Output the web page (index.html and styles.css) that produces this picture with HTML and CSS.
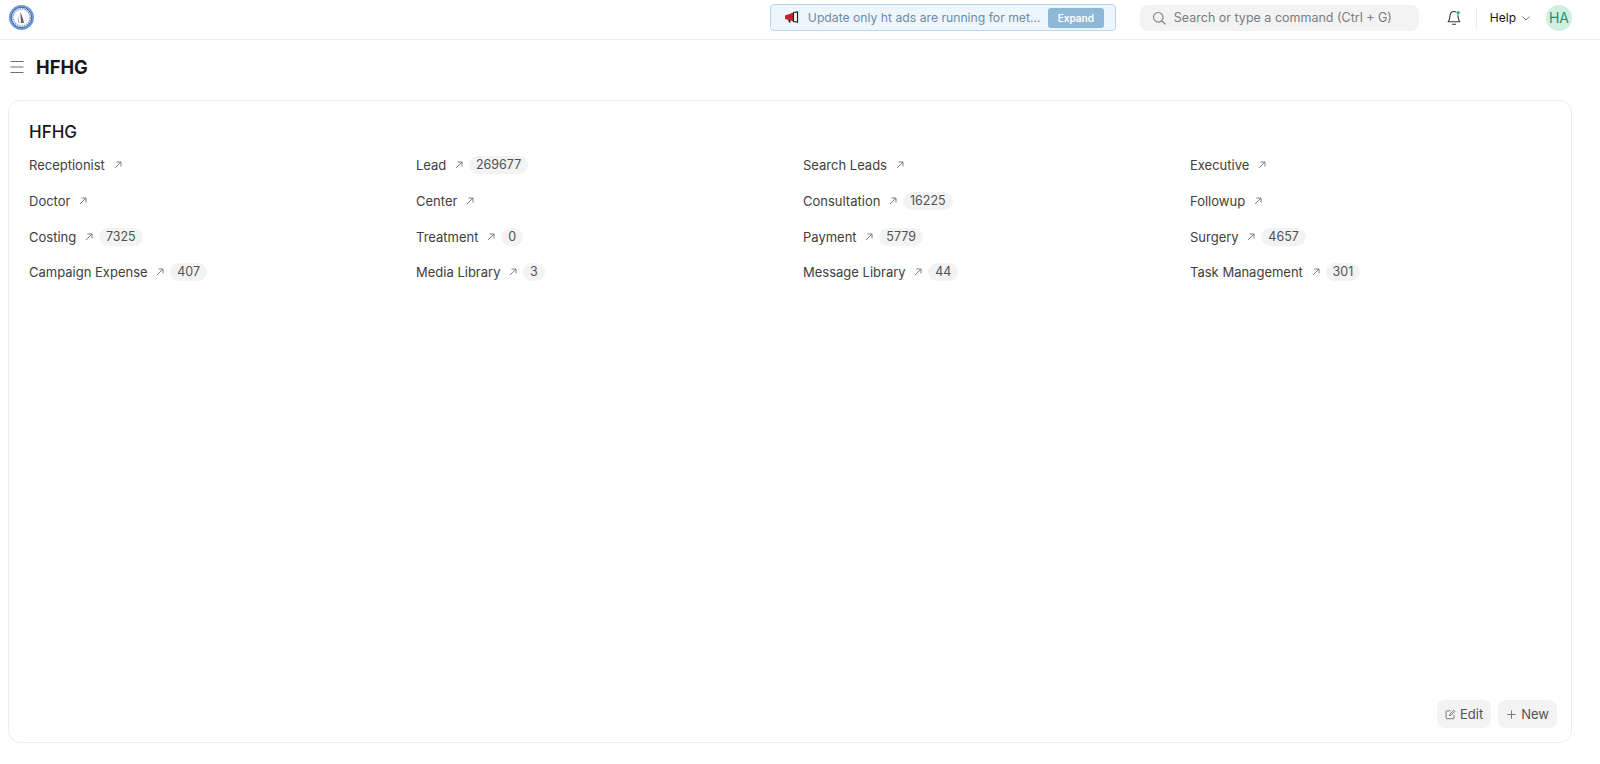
FILE: index.html
```html
<!DOCTYPE html>
<html lang="en">
  <head>
    <meta charset="UTF-8" />
    <title>HFHG</title>
    <link rel="stylesheet" href="styles.css">
  </head>
  <body>
    <header class="navbar">
      <svg class="logo" width="27" height="27" viewBox="0 0 27 27">
        <circle cx="13.500" cy="13.500" r="12.500" fill="#6d9ad8" />
        <circle cx="13.500" cy="13.500" r="10.200" fill="#f2f5fa" stroke="#3a63a5" stroke-width="1" />
        <circle cx="13.500" cy="13.500" r="8.600" fill="none" stroke="#6f8fc0" stroke-width="1.300" stroke-dasharray="1.400 1" />
        <circle cx="13.500" cy="13.500" r="7" fill="#ffffff" />
        <path d="M12.500 8c1 3 2.500 6 3.500 11h-3c0-4-1-7-.5-11z" fill="#5f6670" />
        <path d="M11 11c-.5 3-.5 5 .8 8h-1.300c-1-3-.5-6 .5-8z" fill="#a3a9b2" />
      </svg>
      <div class="announcement">
        <svg class="megaphone" width="15" height="13" viewBox="0 0 15 13">
          <path d="M1 4.500L9.500 1.500v9L1 8z" fill="#c8202c" />
          <path d="M9.500 1.500L13.500 .8v10.400L9.500 10.500z" fill="#ffffff" stroke="#222222" stroke-width="1.200" stroke-linejoin="round" />
          <path d="M4 8.500l1 3h1.800l-1-2.600z" fill="#222222" />
        </svg>
        <span class="announcement-text">Update only ht ads are running for met...</span>
        <button class="expand-btn">Expand</button>
      </div>
      <div class="search">
        <svg width="14" height="14" viewBox="0 0 14 14" fill="none" stroke="#7c7c7c" stroke-width="1.100">
          <circle cx="6.300" cy="6.300" r="4.800" />
          <path d="M10 10l3 3" stroke-linecap="round" />
        </svg>
        <span>Search or type a command (Ctrl + G)</span>
      </div>
      <div class="bell">
        <svg width="18" height="18" viewBox="0 0 18 18" fill="none" stroke="#383838" stroke-width="1.100">
          <path d="M9 2.500c-2.600 0-4 2-4 4.300 0 3.200-.8 4.700-1.800 6h11.600c-1-1.300-1.800-2.800-1.800-6 0-2.300-1.400-4.300-4-4.300z" stroke-linejoin="round" />
          <path d="M7.500 15.300h3" stroke-linecap="round" />
          <circle cx="13.200" cy="3.800" r="2" fill="#2d9d6f" stroke="#ffffff" stroke-width=".8" />
        </svg>
      </div>
      <div class="nav-divider"></div>
      <div class="help">
        <span>Help</span>
        <svg width="10" height="10" viewBox="0 0 10 10" fill="none" stroke="#7c7c7c" stroke-width="1">
          <path d="M1.500 3.500L5 7l3.500-3.500" />
        </svg>
      </div>
      <div class="avatar">HA</div>
    </header>

    <div class="page-head">
      <svg class="menu-icon" width="14" height="14" viewBox="0 0 14 14" stroke="#6f6f6f" stroke-width="1.200">
        <path d="M0.500 1.500h13M0.500 7h13M0.500 12.500h13" />
      </svg>
      <h1>HFHG</h1>
    </div>

    <main class="card">
      <h2>HFHG</h2>
      <div class="links">
        <a class="link">Receptionist <svg class="arrow" viewBox="0 0 10 10"><path d="M2 8l6-6M3.500 2H8v4.500" /></svg></a>
        <a class="link">Lead <svg class="arrow" viewBox="0 0 10 10"><path d="M2 8l6-6M3.500 2H8v4.500" /></svg><span class="count">269677</span></a>
        <a class="link">Search Leads <svg class="arrow" viewBox="0 0 10 10"><path d="M2 8l6-6M3.500 2H8v4.500" /></svg></a>
        <a class="link">Executive <svg class="arrow" viewBox="0 0 10 10"><path d="M2 8l6-6M3.500 2H8v4.500" /></svg></a>

        <a class="link">Doctor <svg class="arrow" viewBox="0 0 10 10"><path d="M2 8l6-6M3.500 2H8v4.500" /></svg></a>
        <a class="link">Center <svg class="arrow" viewBox="0 0 10 10"><path d="M2 8l6-6M3.500 2H8v4.500" /></svg></a>
        <a class="link">Consultation <svg class="arrow" viewBox="0 0 10 10"><path d="M2 8l6-6M3.500 2H8v4.500" /></svg><span class="count">16225</span></a>
        <a class="link">Followup <svg class="arrow" viewBox="0 0 10 10"><path d="M2 8l6-6M3.500 2H8v4.500" /></svg></a>

        <a class="link">Costing <svg class="arrow" viewBox="0 0 10 10"><path d="M2 8l6-6M3.500 2H8v4.500" /></svg><span class="count">7325</span></a>
        <a class="link">Treatment <svg class="arrow" viewBox="0 0 10 10"><path d="M2 8l6-6M3.500 2H8v4.500" /></svg><span class="count">0</span></a>
        <a class="link">Payment <svg class="arrow" viewBox="0 0 10 10"><path d="M2 8l6-6M3.500 2H8v4.500" /></svg><span class="count">5779</span></a>
        <a class="link">Surgery <svg class="arrow" viewBox="0 0 10 10"><path d="M2 8l6-6M3.500 2H8v4.500" /></svg><span class="count">4657</span></a>

        <a class="link">Campaign Expense <svg class="arrow" viewBox="0 0 10 10"><path d="M2 8l6-6M3.500 2H8v4.500" /></svg><span class="count">407</span></a>
        <a class="link">Media Library <svg class="arrow" viewBox="0 0 10 10"><path d="M2 8l6-6M3.500 2H8v4.500" /></svg><span class="count">3</span></a>
        <a class="link">Message Library <svg class="arrow" viewBox="0 0 10 10"><path d="M2 8l6-6M3.500 2H8v4.500" /></svg><span class="count">44</span></a>
        <a class="link">Task Management <svg class="arrow" viewBox="0 0 10 10"><path d="M2 8l6-6M3.500 2H8v4.500" /></svg><span class="count">301</span></a>
      </div>
      <div class="card-actions">
        <button class="action-btn">
          <svg width="11" height="11" viewBox="0 0 12 12" fill="none" stroke="#6f6f6f" stroke-width="1">
            <path d="M6 2H2a.8.8 0 0 0-.8.8v7a.8.8 0 0 0 .8.8h7a.8.8 0 0 0 .8-.8V6.500" />
            <path d="M5 7.200l.4-1.600 4.300-4.200 1.100 1.100-4.200 4.300z" />
          </svg>
          Edit
        </button>
        <button class="action-btn">
          <svg width="11" height="11" viewBox="0 0 12 12" fill="none" stroke="#6f6f6f" stroke-width="1">
            <path d="M6 1.500v9M1.500 6h9" />
          </svg>
          New
        </button>
      </div>
    </main>
  </body>
</html>
```

FILE: styles.css
```css
* {
  margin: 0;
  padding: 0;
  box-sizing: border-box;
}

html,
body {
  height: 100%;
}

body {
  font-family: Inter, "Liberation Sans", sans-serif;
  background-color: #ffffff;
  color: #383838;
  display: flex;
  flex-direction: column;
  height: 764px;
  overflow: hidden;
}

.navbar {
  display: flex;
  align-items: center;
  height: 40px;
  flex-shrink: 0;
  padding: 0 28px 4px 8px;
  border-bottom: 1px solid #ededed;
}

.logo {
  margin-right: auto;
}

.announcement {
  display: flex;
  align-items: center;
  width: 346px;
  height: 27px;
  padding: 0 11px 0 13px;
  background-color: #edf6fd;
  border: 1px solid #b8d8ef;
  border-radius: 4px;
}

.megaphone {
  flex-shrink: 0;
  margin-right: 9px;
}

.announcement-text {
  flex: 1;
  font-size: 12.200px;
  color: #6e8ba3;
  white-space: nowrap;
}

.expand-btn {
  width: 56px;
  height: 20px;
  font-family: inherit;
  font-size: 10px;
  font-weight: 600;
  color: #ffffff;
  background-color: #8fb8d6;
  border: none;
  border-radius: 3px;
}

.search {
  display: flex;
  align-items: center;
  gap: 8px;
  width: 279px;
  height: 26px;
  margin-left: 24px;
  padding-left: 12px;
  background-color: #f3f3f3;
  border-radius: 8px;
  font-size: 12.500px;
  color: #7c7c7c;
}

.bell {
  display: flex;
  margin-left: 26px;
}

.nav-divider {
  width: 1px;
  height: 22px;
  margin-left: 13px;
  background-color: #ededed;
}

.help {
  display: flex;
  align-items: center;
  gap: 5px;
  margin-left: 13px;
  font-size: 12px;
  color: #171717;
}

.avatar {
  display: flex;
  align-items: center;
  justify-content: center;
  width: 26px;
  height: 26px;
  margin-left: 15px;
  border-radius: 50%;
  background-color: #d0efdf;
  color: #2a8f67;
  font-size: 14px;
}

.page-head {
  display: flex;
  align-items: center;
  gap: 12px;
  height: 60px;
  flex-shrink: 0;
  padding: 0 0 6px 10px;
}

.page-head h1 {
  font-size: 18.300px;
  font-weight: 700;
  color: #171717;
}

.card {
  display: flex;
  flex-direction: column;
  flex: 1;
  margin: 0 28px 21px 8px;
  padding: 21px 14px 14px 20px;
  border: 1px solid #ededed;
  border-radius: 12px;
}

.card h2 {
  font-size: 17px;
  font-weight: 500;
  color: #171717;
  line-height: 20px;
}

.links {
  display: grid;
  grid-template-columns: repeat(4, 387px);
  grid-auto-rows: 35.700px;
  margin-top: 5.300px;
  align-items: center;
}

.link {
  display: flex;
  align-items: center;
  font-size: 13px;
  color: #404040;
  white-space: pre;
}

.arrow {
  width: 10px;
  height: 10px;
  margin-left: 4px;
  fill: none;
  stroke: #6f6f6f;
  stroke-width: 0.900;
}

.count {
  margin-left: 5px;
  padding: 0 7px;
  height: 18px;
  line-height: 18px;
  font-size: 12.500px;
  background-color: #f3f3f3;
  border-radius: 9px;
  color: #525252;
}

.card-actions {
  display: flex;
  justify-content: flex-end;
  gap: 7px;
  margin-top: auto;
}

.action-btn {
  display: flex;
  align-items: center;
  gap: 4px;
  height: 28px;
  padding: 0 8px;
  font-family: inherit;
  font-size: 13px;
  color: #525252;
  background-color: #f3f3f3;
  border: none;
  border-radius: 8px;
}
```
